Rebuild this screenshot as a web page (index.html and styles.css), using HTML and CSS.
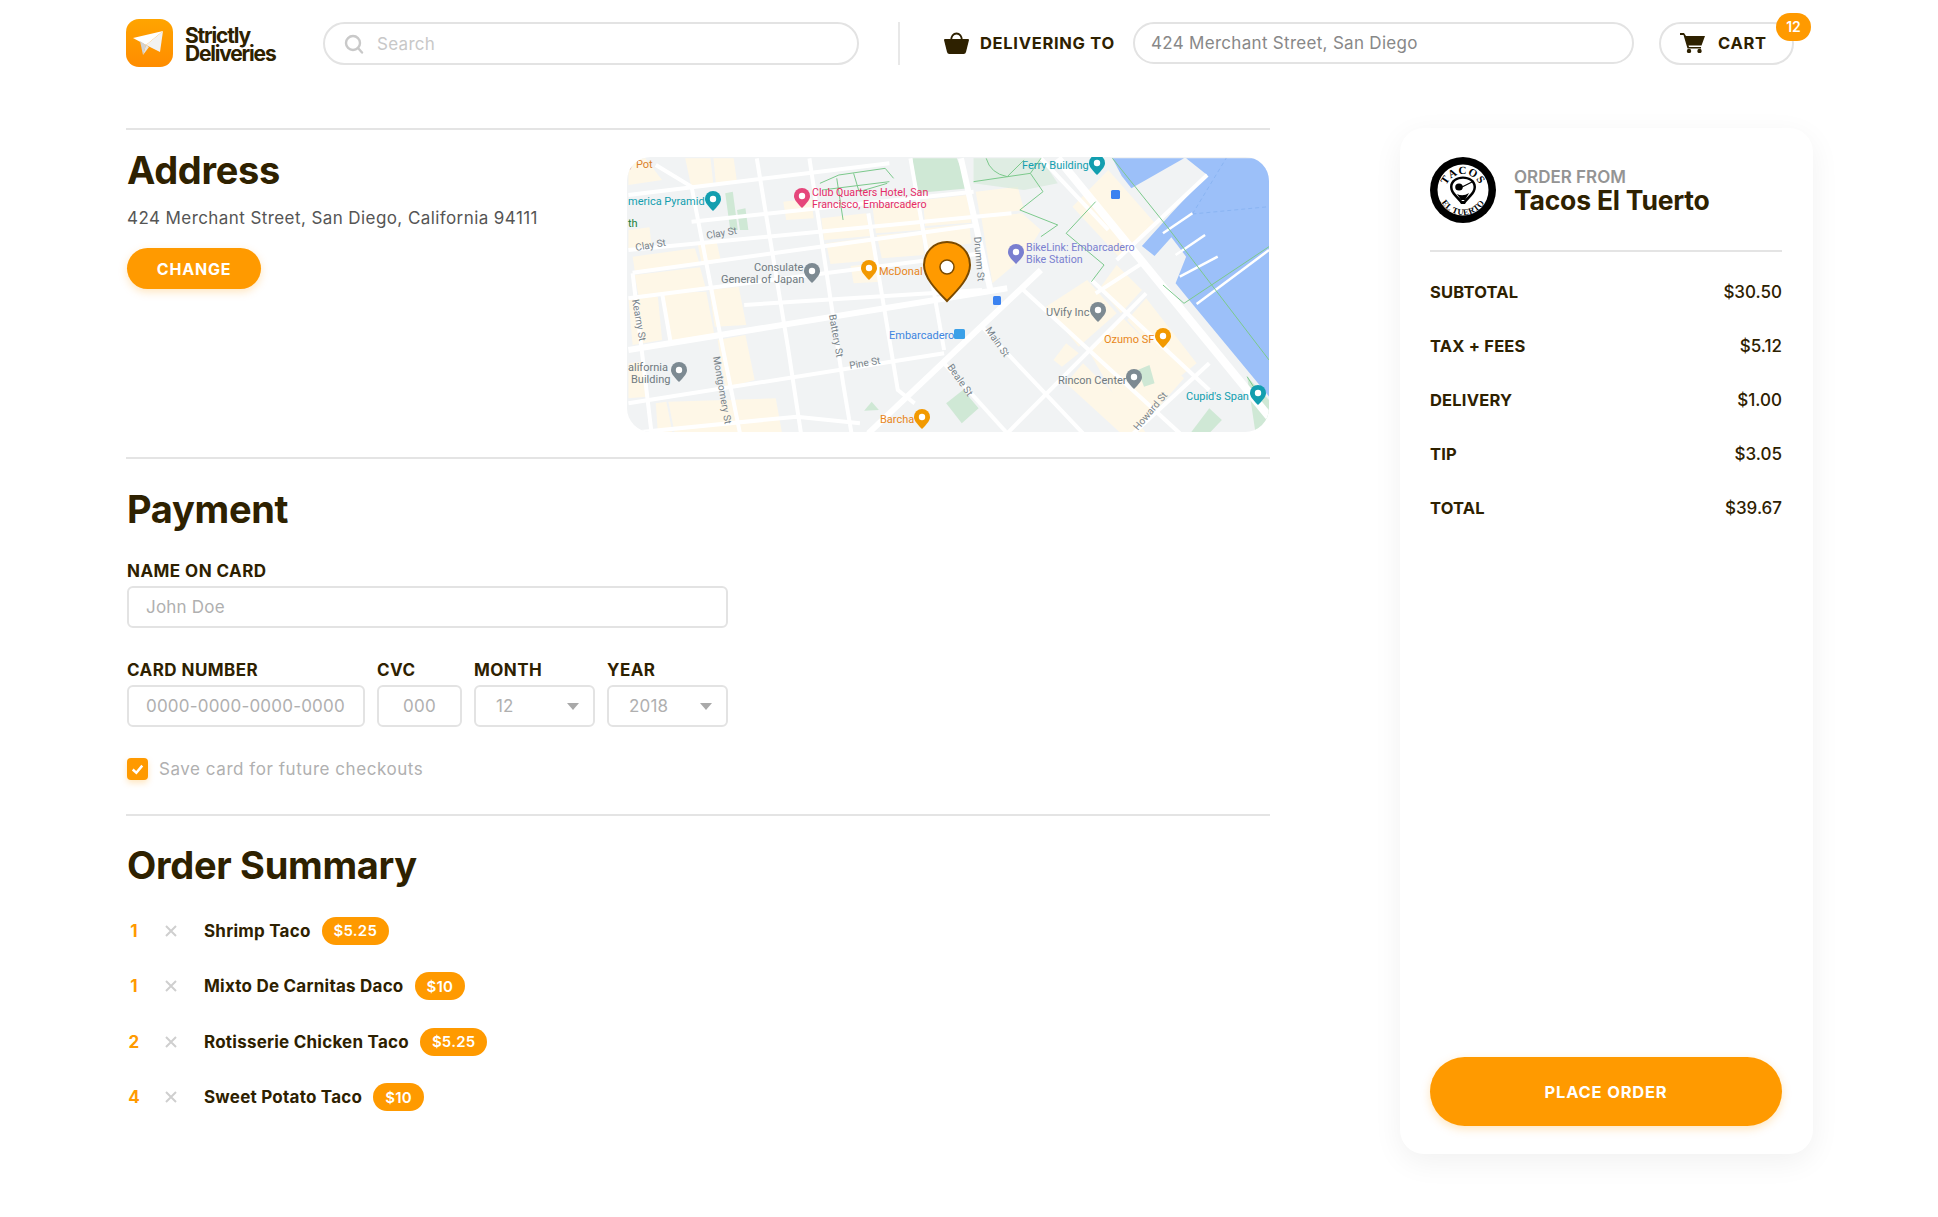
FILE: index.html
```html
<!DOCTYPE html>
<html lang="en">
<head>
<meta charset="utf-8">
<title>Checkout</title>
<link rel="stylesheet" href="styles.css">
</head>
<body>
<header class="header">
  <div class="brand">
    <svg class="logo" viewBox="0 0 47 48"><defs><linearGradient id="lg" x1="0" y1="0" x2="0" y2="1"><stop offset="0" stop-color="#ffa400"/><stop offset="1" stop-color="#ff8c00"/></linearGradient></defs><rect width="47" height="48" rx="13" fill="url(#lg)"/><path d="M7 19 L37 12 L20 26Z" fill="#fff"/><path d="M37 12 L34 33 L20 26Z" fill="#f2f2f2"/><path d="M20 26 L17 36 L14 22Z" fill="#d2d2d2"/><path d="M20 26 L17 36 L23 28Z" fill="#e4e4e4"/></svg>
    <div class="wordmark">Strictly<br>Deliveries</div>
  </div>
  <div class="search">
    <svg class="search-icon" viewBox="0 0 20 20"><circle cx="9" cy="9" r="7" fill="none" stroke="#c9c9c9" stroke-width="2.4"/><path d="M14 14 L18 18.500" stroke="#c9c9c9" stroke-width="2.4" stroke-linecap="round"/></svg>
    <span>Search</span>
  </div>
  <div class="divider"></div>
  <svg class="bag" viewBox="0 0 25 22"><path d="M7 9 C7 -1 18 -1 18 9" fill="none" stroke="#2e2100" stroke-width="2"/><path d="M1 7 H24 a1 1 0 0 1 1 1 L22 20 a2.500 2.500 0 0 1 -2.500 2 H5.500 a2.500 2.500 0 0 1 -2.500 -2 L0 8 a1 1 0 0 1 1 -1Z" fill="#2e2100"/></svg>
  <div class="deliver-label">DELIVERING TO</div>
  <div class="address-pill">424 Merchant Street, San Diego</div>
  <div class="cart">
    <svg class="cart-icon" viewBox="0 0 25 20"><path d="M0 0 H4 L6 3 H25 L21.500 12.500 H8.500 L9 14 H21 V15.500 H7.500 L3.500 2 H0Z" fill="#2e2100"/><circle cx="9" cy="18" r="2.200" fill="#2e2100"/><circle cx="19.500" cy="18" r="2.200" fill="#2e2100"/></svg>
    <span>CART</span>
    <b class="badge">12</b>
  </div>
</header>

<div class="page">
  <main class="main">
    <section class="sec sec-address">
      <div class="addr-text">
        <h1>Address</h1>
        <p class="addr-line">424 Merchant Street, San Diego, California 94111</p>
        <button class="btn-change">CHANGE</button>
      </div>
      <svg class="map" viewBox="0 0 642 275">
        <defs>
          <g id="pin"><path d="M0 9 C-6 3 -8 0 -8 -3 A8 8 0 0 1 8 -3 C8 0 6 3 0 9Z"/><circle cx="0" cy="-3" r="3.200" fill="#fff"/></g>
        </defs>
        <rect width="642" height="275" fill="#f1f3f4"/>
        <g transform="translate(-7 -7) scale(.4209 .3333)">
          <g fill="#fef7e7">
            <path d="M20 25H60L100 90L20 105Z"/>
            <path d="M155 25H215L222 105L170 115Z"/>
            <path d="M222 25H270L278 95L228 105Z"/>
            <path d="M20 240L70 232L75 285L20 295Z"/>
            <path d="M30 320L178 295L190 345L35 362Z"/>
            <path d="M35 375L190 352L205 420L45 445Z"/>
            <path d="M100 430L205 425L225 560L115 575Z"/>
            <path d="M212 420L282 410L300 525L225 530Z"/>
            <path d="M20 445L90 440L100 570L30 585Z"/>
            <path d="M232 570L298 555L320 690L250 715Z"/>
            <path d="M20 640L50 635L65 740L20 745Z"/>
            <path d="M115 755L370 745L385 850H130Z"/>
            <path d="M85 760L110 755L125 850H90Z"/>
            <path d="M478 205L585 190L595 258L485 270Z"/>
            <path d="M490 280L600 262L608 330L500 342Z"/>
            <path d="M548 348L610 340L620 395L555 400Z"/>
            <path d="M600 170L708 155L715 240L608 250Z"/>
            <path d="M610 255L718 245L722 315L622 325Z"/>
            <path d="M720 150L825 135L835 218L725 228Z"/>
            <path d="M725 235L830 222L835 280L730 300Z"/>
            <path d="M845 125L945 110L960 180L855 195Z"/>
            <path d="M858 200L955 190L1000 240L960 320L885 400L870 290Z"/>
            <path d="M388 155L455 145L460 205L395 210Z"/>
            <path d="M185 285L230 278L240 335L195 345Z"/>
            <path d="M1075 170L1160 60L1275 225L1185 320Z"/>
            <path d="M1140 415L1180 345L1240 420L1190 490Z"/>
            <path d="M1012 470L1110 390L1180 490L1090 590Z"/>
            <path d="M1205 510L1250 445L1370 640L1330 680Z"/>
            <path d="M1115 605L1195 505L1340 685L1225 850Z"/>
            <path d="M1030 630L1060 580L1090 610L1050 650Z"/>
            <path d="M1100 640L1205 770L1250 850H1190L1060 700Z"/>
          </g>
          <g fill="#cfe8d5">
            <path d="M695 25H800L830 115L700 130Z"/>
            <path d="M250 130L268 125L280 240L262 240Z"/>
            <path d="M278 180L298 175L305 240L285 240Z"/>
            <path d="M775 760L815 720L852 775L812 820Z"/>
            <path d="M580 782L598 755L615 780Z"/>
            <path d="M1230 660L1258 645L1270 700L1245 710Z"/>
            <path d="M1490 680L1542 750V850H1510Z"/>
            <path d="M1355 850L1400 775L1430 810L1400 850Z"/>
            <path d="M840 25H1000L1040 100L960 120L840 100Z" opacity=".55"/>
          </g>
          <path d="M1170 25H1340L1215 115L1192 78Z" fill="#9cc0f9"/>
          <path d="M1345 25H1542V740L1360 462L1320 400L1345 320L1310 262L1270 318L1240 288L1310 190L1395 75Z" fill="#9cc0f9"/>
          <path d="M1360 192L1542 170M1360 192L1440 25" stroke="#8ab4f2" stroke-width="1" stroke-dasharray="4 3" fill="none" class="ns"/>
          <g stroke="#fff" fill="none" class="ns w4">
            <path d="M20 135L640 40"/>
            <path d="M170 215L840 125"/>
            <path d="M20 300L930 190"/>
            <path d="M30 368L850 225"/>
            <path d="M20 445L860 310"/>
            <path d="M295 465L860 420"/>
            <path d="M20 760L770 610"/>
            <path d="M20 850L420 800L570 820"/>
            <path d="M85 45L170 110L245 600L285 850"/>
            <path d="M325 25L400 600L430 850"/>
            <path d="M450 25L530 700L550 850"/>
            <path d="M590 190L660 720L700 760"/>
            <path d="M690 25L770 600"/>
            <path d="M30 370L75 850"/>
            <path d="M100 430L120 575"/>
            <path d="M950 410L1330 850"/>
            <path d="M860 530L1100 850"/>
            <path d="M770 640L920 850"/>
            <path d="M1120 390L1400 720"/>
            <path d="M920 850L1250 430"/>
            <path d="M1220 850L1400 640"/>
            <path d="M1130 430L1240 340"/>
            <path d="M1180 330L1395 75"/>
            <path d="M1000 25L1160 240"/>
          </g>
          <g stroke="#fff" fill="none" class="ns w7">
            <path d="M20 600L920 415"/>
            <path d="M810 25L880 420"/>
            <path d="M590 850L1000 360"/>
          </g>
          <path d="M1040 25L1542 800" stroke="#fff" fill="none" class="ns w9"/>
          <g stroke="#fff" fill="none" class="ns w2">
            <path d="M1290 250L1360 190"/><path d="M1320 315L1390 255"/><path d="M1330 380L1420 320"/>
            <path d="M1370 462L1542 300"/>
          </g>
          <g stroke="#7cc98c" fill="none" class="ns w1">
            <path d="M475 100L520 75L630 55L650 85"/><path d="M515 85L530 210"/><path d="M555 70L568 125L635 100"/>
            <path d="M480 120L640 95"/><path d="M840 95L975 70L1005 125L950 180L1040 225L1000 260"/>
            <path d="M870 25Q880 70 920 80L960 30"/><path d="M975 70L1000 25"/>
            <path d="M1130 155L1060 250L1150 345L1120 395"/>
            <path d="M1170 25L1300 230L1542 630"/><path d="M1290 405L1340 460L1542 290"/>
            <path d="M1490 680L1510 720"/>
          </g>
        </g>
        <g class="mt">
          <text x="1" y="11" fill="#d9822b">y Pot</text>
          <text x="1" y="48" fill="#129eaf">merica Pyramid</text>
          <text x="1" y="70" fill="#188038">th</text>
          <text x="185" y="39" fill="#e52c68" class="mt-m">Club Quarters Hotel, San</text>
          <text x="185" y="51" fill="#e52c68" class="mt-m">Francisco, Embarcadero</text>
          <text x="395" y="12" fill="#129eaf">Ferry Building</text>
          <text x="399" y="94" fill="#7a7fd0" class="mt-m">BikeLink: Embarcadero</text>
          <text x="399" y="106" fill="#7a7fd0" class="mt-m">Bike Station</text>
          <text x="127" y="114" fill="#6f7a80">Consulate</text>
          <text x="94" y="126" fill="#6f7a80">General of Japan</text>
          <text x="252" y="118" fill="#e8861a">McDonal</text>
          <text x="262" y="182" fill="#3d85e0">Embarcadero</text>
          <text x="419" y="159" fill="#6f7a80">UVify Inc</text>
          <text x="477" y="186" fill="#e8861a">Ozumo SF</text>
          <text x="431" y="227" fill="#6f7a80">Rincon Center</text>
          <text x="253" y="266" fill="#e8861a">Barcha</text>
          <text x="1" y="214" fill="#6f7a80">alifornia</text>
          <text x="4" y="226" fill="#6f7a80">Building</text>
          <text x="559" y="243" fill="#129eaf">Cupid's Span</text>
          <g class="mt-s" fill="#78838a">
            <text x="9" y="94" transform="rotate(-10 9 94)">Clay St</text>
            <text x="80" y="82" transform="rotate(-10 80 82)">Clay St</text>
            <text x="223" y="212" transform="rotate(-10 223 212)">Pine St</text>
            <text x="347" y="80" transform="rotate(85 347 80)">Drumm St</text>
            <text x="202" y="158" transform="rotate(80 202 158)">Battery St</text>
            <text x="5" y="143" transform="rotate(80 5 143)">Kearny St</text>
            <text x="86" y="200" transform="rotate(80 86 200)">Montgomery St</text>
            <text x="358" y="173" transform="rotate(55 358 173)">Main St</text>
            <text x="320" y="210" transform="rotate(55 320 210)">Beale St</text>
            <text x="511" y="274" transform="rotate(-50 511 274)">Howard St</text>
          </g>
        </g>
        <use href="#pin" x="86" y="45" fill="#129eaf"/>
        <use href="#pin" x="175" y="42" fill="#e5467b"/>
        <use href="#pin" x="185" y="117" fill="#7d8a92"/>
        <use href="#pin" x="242" y="114" fill="#f29900"/>
        <use href="#pin" x="389" y="98" fill="#7a7fd0"/>
        <use href="#pin" x="471" y="156" fill="#7d8a92"/>
        <use href="#pin" x="536" y="182" fill="#f29900"/>
        <use href="#pin" x="507" y="223" fill="#7d8a92"/>
        <use href="#pin" x="295" y="263" fill="#f29900"/>
        <use href="#pin" x="52" y="216" fill="#7d8a92"/>
        <use href="#pin" x="470" y="9" fill="#129eaf"/>
        <use href="#pin" x="631" y="239" fill="#129eaf"/>
        <rect x="484" y="33" width="9" height="9" rx="1.500" fill="#3b82f0"/>
        <rect x="366" y="139" width="8" height="9" rx="1.500" fill="#3b82f0"/>
        <rect x="327" y="172" width="11" height="10" rx="1.500" fill="#3aa0e8"/>
        <path d="M320 85 C333 85 343 95 343 108 C343 120 332 132 320 144 C308 132 297 120 297 108 C297 95 307 85 320 85Z" fill="#ff9a00" stroke="#7a4a00" stroke-width="2"/>
        <circle cx="320" cy="110" r="7" fill="#fff" stroke="#7a4a00" stroke-width="1.500"/>
      </svg>
    </section>

    <section class="sec sec-payment">
      <h1>Payment</h1>
      <div class="field field-name">
        <label class="lbl">NAME ON CARD</label>
        <div class="inp">John Doe</div>
      </div>
      <div class="card-row">
        <div class="field f-card"><label class="lbl">CARD NUMBER</label><div class="inp">0000-0000-0000-0000</div></div>
        <div class="field f-cvc"><label class="lbl">CVC</label><div class="inp inp-center">000</div></div>
        <div class="field f-sel"><label class="lbl">MONTH</label><div class="inp inp-sel"><span>12</span><i class="caret"></i></div></div>
        <div class="field f-sel"><label class="lbl">YEAR</label><div class="inp inp-sel"><span>2018</span><i class="caret"></i></div></div>
      </div>
      <div class="save">
        <span class="check"><svg viewBox="0 0 22 22"><path d="M6 11.500 L9.800 15 L16 7.500" fill="none" stroke="#fff" stroke-width="2.600"/></svg></span>
        <span>Save card for future checkouts</span>
      </div>
    </section>

    <section class="sec sec-summary">
      <h1>Order Summary</h1>
      <ul class="items">
        <li class="item"><span class="qty">1</span><svg class="x" viewBox="0 0 12 12"><path d="M1 1 L11 11 M11 1 L1 11" stroke="#cfcfcf" stroke-width="2"/></svg><span class="name">Shrimp Taco</span><span class="price">$5.25</span></li>
        <li class="item"><span class="qty">1</span><svg class="x" viewBox="0 0 12 12"><path d="M1 1 L11 11 M11 1 L1 11" stroke="#cfcfcf" stroke-width="2"/></svg><span class="name">Mixto De Carnitas Daco</span><span class="price">$10</span></li>
        <li class="item"><span class="qty">2</span><svg class="x" viewBox="0 0 12 12"><path d="M1 1 L11 11 M11 1 L1 11" stroke="#cfcfcf" stroke-width="2"/></svg><span class="name">Rotisserie Chicken Taco</span><span class="price">$5.25</span></li>
        <li class="item"><span class="qty">4</span><svg class="x" viewBox="0 0 12 12"><path d="M1 1 L11 11 M11 1 L1 11" stroke="#cfcfcf" stroke-width="2"/></svg><span class="name">Sweet Potato Taco</span><span class="price">$10</span></li>
      </ul>
    </section>
  </main>

  <aside class="panel">
    <div class="from">
      <svg class="tacos" viewBox="0 0 66 66">
        <defs>
          <path id="arcTop" d="M15 35 A18 18 0 0 1 51 35"/>
          <path id="arcBot" d="M8 33 A25 25 0 0 0 58 33"/>
        </defs>
        <circle cx="33" cy="33" r="33" fill="#000"/>
        <circle cx="33" cy="33" r="25.500" fill="#fff"/>
        <text class="tacos-t"><textPath href="#arcTop" startOffset="50%" text-anchor="middle">TACOS</textPath></text>
        <text class="tacos-b"><textPath href="#arcBot" startOffset="50%" text-anchor="middle">EL TUERTO</textPath></text>
        <path d="M20 30 C20 16 46 16 46 30 C46 37 38 42 35 47 H31 C28 42 20 37 20 30Z" fill="#000"/>
        <path d="M22.500 30 C22.500 19 43.500 19 43.500 30 C43.500 36 36 40 34 44 H32 C30 40 22.500 36 22.500 30Z" fill="#fff"/>
        <ellipse cx="29" cy="30" rx="3.800" ry="3.500" fill="#000"/>
        <path d="M32 30 L42 25" stroke="#000" stroke-width="1.200"/>
        <path d="M27 37 Q33 40 39 36 L35 43 H31Z" fill="#000"/>
      </svg>
      <div class="from-text">
        <div class="from-lbl">ORDER FROM</div>
        <div class="from-name">Tacos El Tuerto</div>
      </div>
    </div>
    <dl class="totals">
      <div class="row"><dt>SUBTOTAL</dt><dd>$30.50</dd></div>
      <div class="row"><dt>TAX + FEES</dt><dd>$5.12</dd></div>
      <div class="row"><dt>DELIVERY</dt><dd>$1.00</dd></div>
      <div class="row"><dt>TIP</dt><dd>$3.05</dd></div>
      <div class="row"><dt>TOTAL</dt><dd>$39.67</dd></div>
    </dl>
    <button class="btn-place">PLACE ORDER</button>
  </aside>
</div>
</body>
</html>
```
FILE: styles.css
```css
* { box-sizing: border-box; }
html, body { margin: 0; padding: 0; }
body {
  width: 1938px;
  height: 1217px;
  overflow: hidden;
  background: #fff;
  color: #2e2100;
  font-family: Inter, "Noto Sans", sans-serif;
  font-size: 17px;
}
.header {
  display: flex;
  align-items: center;
  height: 86px;
  padding-left: 126px;
}
.brand { display: flex; align-items: center; gap: 12px; margin-right: 47px; }
.logo { width: 47px; height: 48px; display: block; }
.wordmark {
  width: 91px;
  padding-top: 3px;
  font-size: 21px;
  font-weight: 700;
  line-height: 18px;
  letter-spacing: -1.200px;
  white-space: nowrap;
}
.search {
  display: flex;
  align-items: center;
  gap: 13px;
  width: 536px;
  height: 43px;
  padding: 1px 0 0 19px;
  border: 2px solid #e3e3e3;
  border-radius: 22px;
  color: #c8c8c8;
  letter-spacing: .3px;
}
.search-icon { width: 20px; height: 20px; }
.divider { width: 2px; height: 43px; margin: 0 44px 0 39px; background: #e8e8e8; }
.bag { width: 25px; height: 22px; margin-right: 11px; }
.deliver-label { width: 153px; font-weight: 700; font-size: 16.500px; letter-spacing: .7px; white-space: nowrap; }
.address-pill {
  display: flex;
  align-items: center;
  width: 501px;
  height: 42px;
  padding-left: 16px;
  border: 2px solid #e3e3e3;
  border-radius: 21px;
  color: #888;
  letter-spacing: .3px;
  margin-right: 25px;
}
.cart {
  position: relative;
  display: flex;
  align-items: center;
  gap: 13px;
  width: 135px;
  height: 43px;
  padding-left: 19px;
  border: 2px solid #e3e3e3;
  border-radius: 22px;
  font-weight: 700;
  font-size: 16.500px;
  letter-spacing: .7px;
}
.cart-icon { width: 25px; height: 20px; }
.badge {
  position: absolute;
  top: -11px;
  right: -19px;
  display: flex;
  align-items: center;
  justify-content: center;
  width: 35px;
  height: 28px;
  border-radius: 14px;
  background: #ff9a00;
  color: #fff;
  font-size: 14px;
  font-weight: 600;
  letter-spacing: 0;
}
.page {
  display: flex;
  align-items: flex-start;
  gap: 130px;
  padding-left: 126px;
  padding-top: 42px;
}
.main { width: 1144px; }
.sec { border-top: 2px solid #e4e4e4; padding-left: 1px; }
h1 { margin: 0; font-size: 38px; line-height: 52px; font-weight: 700; letter-spacing: -.3px; }
.sec-address {
  display: flex;
  justify-content: space-between;
  height: 329px;
  padding-top: 27px;
  padding-right: 1px;
}
.addr-text h1 { margin-top: -13px; }
.addr-line { margin: 10px 0 0; font-size: 17px; line-height: 24px; color: #555; letter-spacing: .42px; }
.btn-change {
  display: block;
  width: 134px;
  height: 41px;
  margin-top: 18px;
  border: 0;
  border-radius: 21px;
  background: #ff9a00;
  color: #fff;
  font: 700 16px Inter, sans-serif;
  letter-spacing: .8px;
  box-shadow: 0 3px 8px rgba(255, 154, 0, .25);
}
.map { width: 642px; height: 275px; border-radius: 24px; display: block; }
.ns { vector-effect: non-scaling-stroke; }
.ns path { vector-effect: non-scaling-stroke; }
.w1 { stroke-width: 1px; }
.w2 { stroke-width: 2.500px; }
.w4 { stroke-width: 4px; }
.w7 { stroke-width: 6px; }
.w9 { stroke-width: 8px; }
.mt text { font-family: Roboto, sans-serif; font-size: 11px; }
.mt text.mt-m { font-size: 10.700px; }
.mt .mt-s text { font-size: 10px; }
.sec-payment { height: 357px; padding-top: 24px; }
.field { display: flex; flex-direction: column; }
.lbl { font-weight: 700; font-size: 17px; line-height: 20px; height: 25px; letter-spacing: .45px; }
.field-name { width: 601px; margin-top: 26px; }
.inp {
  display: flex;
  align-items: center;
  height: 42px;
  padding-left: 17px;
  border: 2px solid #e3e3e3;
  border-radius: 6px;
  color: #b0b0b0;
  font-size: 17px;
  letter-spacing: .2px;
  white-space: nowrap;
}
.inp-center { justify-content: center; padding-left: 0; }
.inp-sel { justify-content: space-between; padding: 0 14px 0 20px; }
.caret {
  width: 0;
  height: 0;
  border-left: 6px solid transparent;
  border-right: 6px solid transparent;
  border-top: 7px solid #a9a9a9;
}
.card-row { display: flex; gap: 12px; width: 601px; margin-top: 32px; }
.f-card { width: 238px; }
.f-cvc { width: 85px; }
.f-sel { width: 121px; }
.save { display: flex; align-items: center; gap: 11px; margin-top: 31px; color: #b0b0b0; letter-spacing: .55px; }
.check {
  width: 21px;
  height: 22px;
  border-radius: 4px;
  background: #ff9a00;
  box-shadow: 0 3px 6px rgba(255, 154, 0, .25);
}
.check svg { display: block; width: 21px; height: 22px; }
.sec-summary { padding-top: 23px; }
.items { list-style: none; margin: 12px 0 0; padding: 0; }
.item { display: flex; align-items: center; height: 55.500px; font-weight: 700; font-size: 17px; letter-spacing: .23px; }
.qty { width: 14px; margin-right: 24px; text-align: center; color: #ff9a00; }
.x { width: 12px; height: 12px; margin-right: 27px; }
.price {
  display: flex;
  align-items: center;
  height: 28px;
  margin-left: 11px;
  padding: 0 12px;
  border-radius: 14px;
  background: #ff9a00;
  color: #fff;
  font-size: 15px;
  font-weight: 600;
}
.panel {
  display: flex;
  flex-direction: column;
  width: 413px;
  height: 1026px;
  padding: 29px 31px 28px 30px;
  border-radius: 24px;
  background: #fff;
  box-shadow: 0 8px 30px rgba(0, 0, 0, .06);
}
.from { display: flex; align-items: center; gap: 18px; height: 95px; padding-bottom: 28px; border-bottom: 2px solid #e4e4e4; }
.tacos { width: 66px; height: 66px; flex: none; }
.tacos-t { font: 700 11px "Liberation Serif", serif; fill: #000; letter-spacing: 1px; }
.tacos-b { font: 700 8.500px "Liberation Serif", serif; fill: #000; letter-spacing: .4px; }
.from-lbl { font-size: 17px; line-height: 19px; font-weight: 600; color: #949494; margin-top: 2px; }
.from-name { font-size: 26.500px; line-height: 27px; font-weight: 700; letter-spacing: -.2px; }
.totals { margin: 13px 0 0; flex: 1; }
.row { display: flex; justify-content: space-between; align-items: center; height: 54px; }
.row dt { font-weight: 700; font-size: 16.500px; letter-spacing: .2px; }
.row dd { margin: 0; font-weight: 500; font-size: 17px; }
.btn-place {
  height: 69px;
  border: 0;
  border-radius: 35px;
  background: #ff9a00;
  color: #fff;
  font: 700 16.500px Inter, sans-serif;
  letter-spacing: .8px;
  box-shadow: 0 3px 10px rgba(255, 154, 0, .25);
}
```
